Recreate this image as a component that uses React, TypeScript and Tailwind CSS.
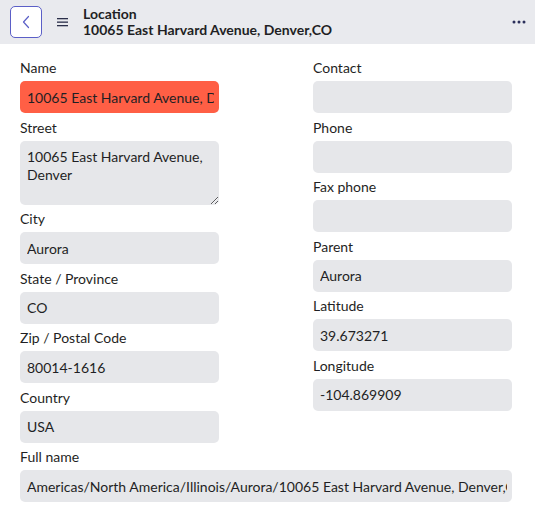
import React from 'react';

const font = { fontFamily: 'Lato, "Noto Sans", sans-serif' };

const Field: React.FC<{ label: string; value?: string; error?: boolean }> = ({ label, value = '', error }) => (
  <div className="mb-[4.5px]">
    <div className="text-[14px] leading-5 mb-[3px] text-[#1f1f24]">{label}</div>
    <input
      readOnly
      value={value}
      className={`w-full h-8 rounded-[5px] pl-[7px] pr-[5px] text-[14px] text-[#1f1f24] outline-none ${
        error ? 'bg-[#ff5f45]' : 'bg-[#e6e7ea]'
      }`}
      style={font}
    />
  </div>
);

export default function App() {
  return (
    <div className="w-[535px] h-[507px] bg-white overflow-hidden" style={font}>
      {/* Header */}
      <div className="h-11 bg-[#e9eaee] flex items-center pl-[10px] pr-[9px]">
        <button className="w-8 h-8 rounded-[5px] border border-[#5b5fc7] bg-white flex items-center justify-center">
          <svg width="10" height="14" viewBox="0 0 10 14" fill="none">
            <path d="M7.5 1.5 L2.5 7 L7.5 12.5" stroke="#5b5fc7" strokeWidth="1.2" strokeLinecap="round" strokeLinejoin="round" />
          </svg>
        </button>
        <svg className="ml-[15px]" width="12" height="10" viewBox="0 0 12 10">
          <rect x="0" y="1" width="11" height="1.3" fill="#2b2f4a" />
          <rect x="0" y="4.5" width="11" height="1.3" fill="#2b2f4a" />
          <rect x="0" y="8" width="11" height="1.3" fill="#2b2f4a" />
        </svg>
        <div className="ml-[14px] flex-1 text-[14px] font-bold leading-4 text-[#1f1f24]">
          <div>Location</div>
          <div>10065 East Harvard Avenue, Denver,CO</div>
        </div>
        <svg width="14" height="4" viewBox="0 0 14 4">
          <circle cx="2" cy="2" r="1.5" fill="#2b2f5a" />
          <circle cx="7" cy="2" r="1.5" fill="#2b2f5a" />
          <circle cx="12" cy="2" r="1.5" fill="#2b2f5a" />
        </svg>
      </div>

      {/* Form */}
      <div className="pl-5 pr-[23px] pt-[14px]">
        <div className="flex gap-[94px]">
          <div className="w-[199px]">
            <Field label="Name" value="10065 East Harvard Avenue, Denver,CO" error />
            <div className="mb-[4.5px]">
              <div className="text-[14px] leading-5 mb-[3px] text-[#1f1f24]">Street</div>
              <textarea
                readOnly
                value={'10065 East Harvard Avenue, Denver'}
                className="block w-full h-16 rounded-[5px] pl-[7px] pr-2 py-[7px] text-[14px] leading-[18px] text-[#1f1f24] bg-[#e6e7ea] outline-none resize-y"
                style={font}
              />
            </div>
            <Field label="City" value="Aurora" />
            <Field label="State / Province" value="CO" />
            <Field label="Zip / Postal Code" value="80014-1616" />
            <Field label="Country" value="USA" />
          </div>
          <div className="w-[199px]">
            <Field label="Contact" />
            <Field label="Phone" />
            <Field label="Fax phone" />
            <Field label="Parent" value="Aurora" />
            <Field label="Latitude" value="39.673271" />
            <Field label="Longitude" value="-104.869909" />
          </div>
        </div>
        <Field label="Full name" value="Americas/North America/Illinois/Aurora/10065 East Harvard Avenue, Denver,CO" />
      </div>
    </div>
  );
}
